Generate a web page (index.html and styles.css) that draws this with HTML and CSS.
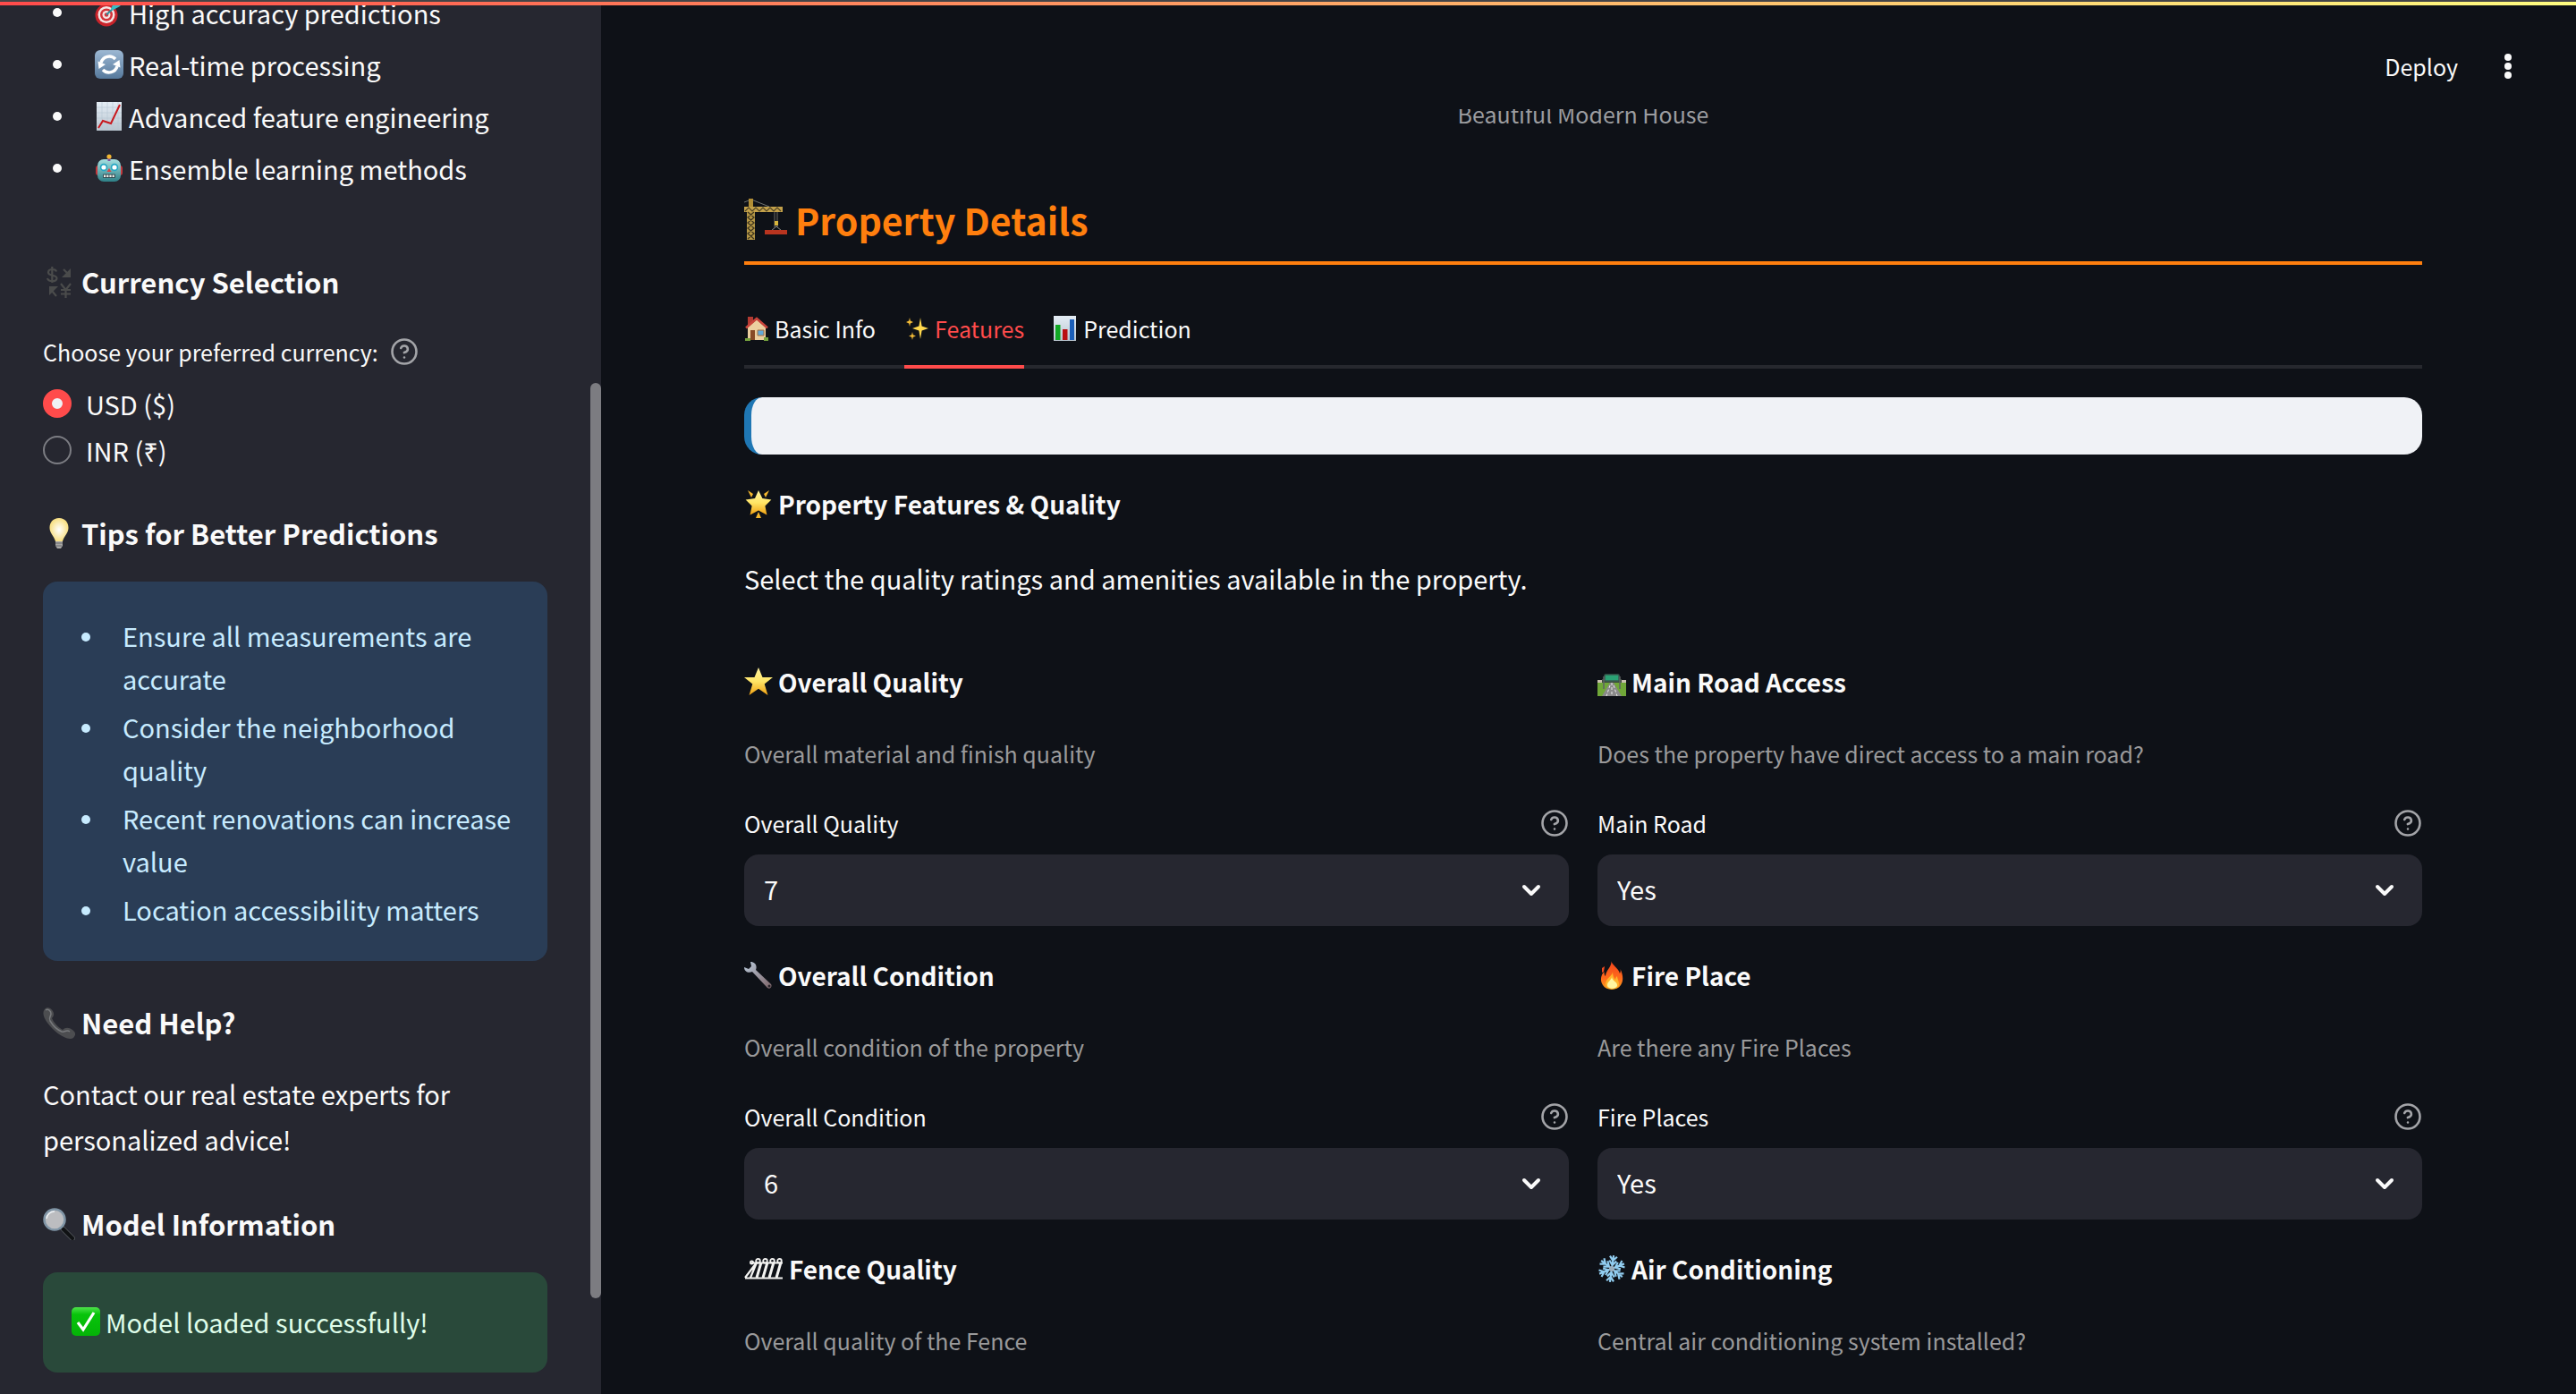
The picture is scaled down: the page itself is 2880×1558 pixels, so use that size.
FILE: index.html
```html
<!DOCTYPE html>
<html lang="en">
<head>
<meta charset="utf-8">
<title>Property Details</title>
<link rel="stylesheet" href="styles.css">
</head>
<body>
<svg class="sprite" aria-hidden="true">
  <defs>
    <linearGradient id="gold" x1="0" y1="0" x2="0" y2="1"><stop offset="0" stop-color="#fff3a0"/><stop offset=".5" stop-color="#ffe566"/><stop offset="1" stop-color="#f0a010"/></linearGradient>
    <linearGradient id="steel" x1="0" y1="0" x2="0" y2="1"><stop offset="0" stop-color="#9db8d3"/><stop offset="1" stop-color="#56799c"/></linearGradient>
    <linearGradient id="paper" x1="0" y1="0" x2="0" y2="1"><stop offset="0" stop-color="#e4edf5"/><stop offset="1" stop-color="#b9c5cf"/></linearGradient>
    <linearGradient id="teal" x1="0" y1="0" x2="0" y2="1"><stop offset="0" stop-color="#a5dfe0"/><stop offset="1" stop-color="#2e8087"/></linearGradient>
    <linearGradient id="green" x1="0" y1="0" x2="0" y2="1"><stop offset="0" stop-color="#4fe34b"/><stop offset=".25" stop-color="#08c40b"/><stop offset="1" stop-color="#04b307"/></linearGradient>
    <linearGradient id="flame" x1="0" y1="0" x2="0" y2="1"><stop offset="0" stop-color="#f0431c"/><stop offset=".6" stop-color="#ff6a1c"/><stop offset="1" stop-color="#f9a01c"/></linearGradient>
    <radialGradient id="glow"><stop offset="0" stop-color="#fff"/><stop offset="1" stop-color="#f8df82"/></radialGradient>
    <linearGradient id="tool" x1="0" y1="0" x2="1" y2="1"><stop offset="0" stop-color="#b9cadb"/><stop offset="1" stop-color="#7d6468"/></linearGradient>
  </defs>
  <symbol id="i-target" viewBox="0 0 32 32"><circle cx="13" cy="19" r="12.500" fill="#c9242b"/><circle cx="13" cy="18.500" r="9.500" fill="#f4e6e4"/><circle cx="13" cy="18.500" r="7" fill="#d4343a"/><circle cx="13" cy="18.500" r="4.500" fill="#f4e6e4"/><circle cx="13" cy="18.500" r="2.300" fill="#d4343a"/><path d="M13 18.500 24 8" stroke="#2d8f9d" stroke-width="2"/><path d="M18 12l4-9 4-2 0 4 6-1-4 5-9 5z" fill="#37bcc4"/></symbol>
  <symbol id="i-refresh" viewBox="0 0 32 32"><rect width="32" height="32" rx="6" fill="url(#steel)"/><path d="M7 14a9.500 9.500 0 0 1 16-4M25 18a9.500 9.500 0 0 1-16 4" fill="none" stroke="#fff" stroke-width="3.500"/><path d="M3.500 12.500l1 8.500 7.500-5zM28.500 19.500l-1-8.500-7.500 5z" fill="#fff"/></symbol>
  <symbol id="i-trend" viewBox="0 0 32 32"><path fill="url(#paper)" d="M2 0h28v32H2z"/><path d="M8 0v32M14 0v32M20 0v32M26 0v32M2 6h28M2 12h28M2 18h28M2 24h28" stroke="#b5c6d4" stroke-width=".6"/><path d="M4 29l5-8 9 3L28 3" fill="none" stroke="#c8191e" stroke-width="2"/></symbol>
  <symbol id="i-robot" viewBox="0 0 32 32"><rect x="1" y="13" width="30" height="11" rx="3" fill="#c4373c"/><rect x="3" y="6" width="26" height="25" rx="7" fill="url(#teal)"/><path d="M14.500 3h3v5h-3z" fill="#7d4fa0"/><circle cx="16" cy="3" r="2.600" fill="#f2b632"/><circle cx="10" cy="15" r="4.200" fill="#24a7c4"/><circle cx="22" cy="15" r="4.200" fill="#24a7c4"/><circle cx="10" cy="15" r="2.600" fill="#fff"/><circle cx="22" cy="15" r="2.600" fill="#fff"/><path d="M16 16l2.500 4h-5z" fill="#d84445"/><rect x="9" y="22.500" width="14" height="4.500" rx="1" fill="#314a52"/><path d="M10 24.700h12" stroke="#f1f1ea" stroke-width="2.500" stroke-dasharray="2.200 1"/></symbol>
  <symbol id="i-currency" viewBox="0 0 36 36"><g fill="none" stroke="#4a4b4b" stroke-width="2.200"><path d="M15 6.500c-1-3.500-9-3.500-9 1 0 4.500 9.500 2 9.500 6.500 0 4.500-9.500 4-10.500 0M10.300 1v18"/><path d="M20 20l5.500 7 5.500-7M25.500 27v9M20 27h11M20 31.500h11M23 4l6 6M15 34l-5-6"/></g><path d="M31 3v10H21zM7 23h10L7 33z" fill="#4a4b4b"/></symbol>
  <symbol id="i-bulb" viewBox="0 0 36 36"><path d="M18 1C11 1 7.500 6 7.500 12c0 6 5 9 6.500 15h8c1.500-6 6.500-9 6.500-15C28.500 6 25 1 18 1z" fill="url(#glow)"/><path d="M14 27h8v5l-2 3h-4l-2-3z" fill="#a8a7a5"/><path d="M14 29h8M14 32h7" stroke="#67686c"/></symbol>
  <symbol id="i-phone" viewBox="0 0 36 36"><path d="M2 3c2-3 7-2 9 2 2 3 1 6-1 8 2 5 7 10 12 13 3-3 7-3 11 0 4 3 4 6 1 9-4 3-14-1-23-10S-2 8 2 3z" fill="#4c4d50"/><path d="M3 4c3-2 6 1 6 4s-3 4-1 8c3 5 8 10 13 12 4 1 5-3 9 0" fill="none" stroke="#77797c" stroke-width="1.500"/></symbol>
  <symbol id="i-search" viewBox="0 0 36 36"><path d="M22 23l11 11" stroke="#4d5156" stroke-width="6" stroke-linecap="round"/><path d="M22.500 23.500l10.500 10.500" stroke="#101214" stroke-width="4" stroke-linecap="round"/><circle cx="13" cy="13" r="11.500" fill="#bcbdc0" stroke="#8095a6" stroke-width="2.500"/><path d="M4 12a9 9 0 0 1 9-8" fill="none" stroke="#eef3f6" stroke-width="1.500"/></symbol>
  <symbol id="i-check" viewBox="0 0 32 32"><rect width="32" height="32" rx="5" fill="url(#green)"/><path d="M7 17l6 8L25 6" fill="none" stroke="#fff" stroke-width="3.200"/></symbol>
  <symbol id="i-crane" viewBox="0 0 48 48"><path d="M0 5l8-3 20 8" fill="none" stroke="#6f726f"/><path d="M5 1h5v10H5z" fill="#b18e35"/><path d="M0 10h43v6H0z" fill="#c3a14a"/><path d="M1 15l4-4 4 4 4-4 4 4 4-4 4 4 4-4 4 4 4-4 4 4" fill="none" stroke="#4f4325" stroke-width="1.200"/><path d="M3 16h9v31H3z" fill="#b69746"/><path d="M4 16l7 6-7 6 7 6-7 6 7 6M11 16l-7 6 7 6-7 6 7 6-7 6" fill="none" stroke="#40371f" stroke-width="1.300"/><path d="M34 16v17M37 16v17" stroke="#6c6a65"/><path d="M34 26h4v5h-4z" fill="#d8b53c"/><path d="M36 32l-6 5M36 32l6 5" stroke="#8a8a88"/><path d="M23 36h25v5H23z" fill="#b8341f"/></symbol>
  <symbol id="i-house" viewBox="0 0 28 28"><path d="M4 1h6v9H4z" fill="#b23a32"/><path d="M4 13l10-9 10 9v14H4z" fill="#eccfa0"/><path d="M2 13.500L14 3l12 10.500" fill="none" stroke="#c9443b" stroke-width="2.600"/><path d="M7 16h5v11H7z" fill="#874a26"/><path d="M15 16h7v6h-7z" fill="#62a9d8" stroke="#a36d3e"/><path d="M1 25h6v3H1zM22 24h5v4h-5z" fill="#76a33e"/></symbol>
  <symbol id="i-sparkles" viewBox="0 0 28 28"><path d="M18 2l1.600 9.400 7.400 2.600-7.400 2.600L18 26l-1.600-9.400L9 14l7.400-2.600z" fill="#ffd84d"/><path d="M6 2l.8 3.600L10 7l-3.200 1.400L6 12l-.8-3.600L2 7l3.200-1.400zM9 18l.8 3.200 3.200 1.300-3.200 1.300L9 27l-.8-3.200L5 22.500l3.200-1.300z" fill="#f3bb37"/></symbol>
  <symbol id="i-bars" viewBox="0 0 28 28"><path d="M1 0h25v28H1z" fill="url(#paper)"/><path d="M3 10h5.500v17H3z" fill="#10a824"/><path d="M11 15h5.500v12H11z" fill="#b90f12"/><path d="M19 4h5v23h-5z" fill="#1b5fb9"/></symbol>
  <symbol id="i-glowstar" viewBox="0 0 32 32"><path d="M16 1l4.400 9 10 1.500-7 7 2 10-9.400-5-9.400 5 2-10-7-7L12 10z" fill="url(#gold)"/><path d="M4 1l6 4-2 4zM28 1l-6 4 2 4zM16 25l-3 7h6z" fill="#f4b72d"/></symbol>
  <symbol id="i-star" viewBox="0 0 32 32"><path d="M16 0l4.500 11H32l-9.300 7.500L26.500 31 16 23.800 5.500 31l3.800-12.500L0 11h11.500z" fill="url(#gold)"/></symbol>
  <symbol id="i-road" viewBox="0 0 32 32"><path d="M0 16h32v16H0z" fill="#70a738"/><path d="M0 14h32v3H0z" fill="#c8bfae"/><path d="M5 13h22v4H5z" fill="#3d4a3e"/><path d="M14 17h4l9 15H5z" fill="#8a8a8a"/><path d="M16 17v15M14 20l-4 12M18 20l4 12" stroke="#eee" stroke-dasharray="3 2"/><rect x="8" y="8" width="16" height="7" rx="1" fill="#2aa274" stroke="#385c50" stroke-width="1.500"/><path d="M7 10v14M25 10v14" stroke="#5d6264" stroke-width="1.500"/></symbol>
  <symbol id="i-wrench" viewBox="0 0 32 32"><path d="M7 1l1 5-3 3-5-2c0 5 5 7 9 5l16 17c3 4 7 0 5-3L13 10c2-5-1-9-6-9z" fill="url(#tool)"/><circle cx="28" cy="28" r="1.500" fill="#28242a"/></symbol>
  <symbol id="i-fire" viewBox="0 0 32 32"><path d="M15.500 0c0 4 8 8 9.500 14 1-2 1-3 .5-5 3 6 4 13 .5 18-4 6.500-16 6.500-20 0-4-6-1.500-12 1.500-15 0 3 .5 4 1.500 5 .5-7 7-10 6.500-17z" fill="url(#flame)"/><path d="M17 12c0 5-8 7-8 14 0 7 15 7 15 0 0-4-2-6-2-9-2 2-2 3-2 4-2-2-3-5-3-9z" fill="#ffb32b"/><path d="M16 18c0 3-5 5-5 9 0 5 11 5 11 0 0-4-5-4-6-9z" fill="#fff6a0"/><path d="M5 8l3-2-1 6-2 1z" fill="#f04b20"/></symbol>
  <symbol id="i-fence" viewBox="0 0 44 24"><g fill="none" stroke="#f3f3f1" stroke-width="2.200" stroke-linejoin="round"><path d="M8 5.500h35M1 22.500h42M1 22L14 5M7 22l7-17"/><path d="M14 22l5-17M21 22l5-17M28 22l5-17M36 22l5-17" stroke-width="3"/></g><g fill="none" stroke="#f3f3f1" stroke-width="1.800"><circle cx="8.500" cy="5" r="1.600"/><circle cx="15.500" cy="3.300" r="2.300"/><circle cx="23.500" cy="3.300" r="2.300"/><circle cx="31.500" cy="3.300" r="2.300"/><circle cx="39.500" cy="3.300" r="2.300"/></g></symbol>
  <symbol id="i-snow" viewBox="0 0 32 32"><g fill="none" stroke="#91cdf0" stroke-width="2.200" transform="rotate(8 16 16)"><path id="arm" d="M16 16V1M12 2l4 5 4-5M12 7l4 5 4-5"/><use href="#arm" transform="rotate(60 16 16)"/><use href="#arm" transform="rotate(120 16 16)"/><use href="#arm" transform="rotate(180 16 16)"/><use href="#arm" transform="rotate(240 16 16)"/><use href="#arm" transform="rotate(300 16 16)"/></g><circle cx="16" cy="16" r="3" fill="#9aaebd"/></symbol>
  <symbol id="i-help" viewBox="0 0 32 32"><g fill="none" stroke="currentColor" stroke-width="2.600" stroke-linecap="round" stroke-linejoin="round"><circle cx="16" cy="16" r="13.500"/><path d="M12.200 12a4 4 0 0 1 7.700 1.300c0 2.700-4 3.800-4 3.800M16 22.500h.01"/></g></symbol>
</svg>

<div class="app">
  <div class="decoration"></div>
  <aside class="sidebar">
    <ul class="highlights">
      <li><svg class="emoji"><use href="#i-target"/></svg>High accuracy predictions</li>
      <li><svg class="emoji"><use href="#i-refresh"/></svg>Real-time processing</li>
      <li><svg class="emoji"><use href="#i-trend"/></svg>Advanced feature engineering</li>
      <li><svg class="emoji"><use href="#i-robot"/></svg>Ensemble learning methods</li>
    </ul>

    <section class="currency">
      <h3 class="side-title"><svg class="emoji large"><use href="#i-currency"/></svg>Currency Selection</h3>
      <div class="field-label currency-label"><span id="currency-label">Choose your preferred currency:</span><button class="help" type="button" aria-label="Help"><svg><use href="#i-help"/></svg></button></div>
      <div class="radios" role="radiogroup" aria-labelledby="currency-label">
        <label class="radio"><input type="radio" name="currency" checked>USD ($)</label>
        <label class="radio"><input type="radio" name="currency">INR (₹)</label>
      </div>
    </section>

    <section class="side-section">
      <h3 class="side-title"><svg class="emoji large"><use href="#i-bulb"/></svg>Tips for Better Predictions</h3>
      <ul class="notice tips">
        <li>Ensure all measurements are accurate</li>
        <li>Consider the neighborhood quality</li>
        <li>Recent renovations can increase value</li>
        <li>Location accessibility matters</li>
      </ul>
    </section>

    <section class="side-section">
      <h3 class="side-title"><svg class="emoji large"><use href="#i-phone"/></svg>Need Help?</h3>
      <p class="side-text">Contact our real estate experts for personalized advice!</p>
    </section>

    <section class="side-section">
      <h3 class="side-title"><svg class="emoji large"><use href="#i-search"/></svg>Model Information</h3>
      <p class="notice success"><svg class="emoji"><use href="#i-check"/></svg>Model loaded successfully!</p>
    </section>
    <div class="scroll-thumb"></div>
  </aside>

  <main class="main">
    <header class="toolbar">
      <button class="deploy" type="button">Deploy</button>
      <button class="menu" type="button" aria-label="Menu"><svg viewBox="0 0 8 28"><circle cx="4" cy="4" r="4"/><circle cx="4" cy="14" r="4"/><circle cx="4" cy="24" r="4"/></svg></button>
    </header>
    <div class="content">
      <p class="image-caption">Beautiful Modern House</p>
      <h2 class="page-title"><svg class="emoji crane"><use href="#i-crane"/></svg>Property Details</h2>
      <div class="tabs" role="tablist">
        <button class="tab" type="button" role="tab" aria-selected="false"><svg class="emoji small"><use href="#i-house"/></svg>Basic Info</button>
        <button class="tab active" type="button" role="tab" aria-selected="true"><svg class="emoji small"><use href="#i-sparkles"/></svg>Features</button>
        <button class="tab" type="button" role="tab" aria-selected="false"><svg class="emoji small"><use href="#i-bars"/></svg>Prediction</button>
      </div>
      <div class="card"></div>
      <h3 class="item-title"><svg class="emoji"><use href="#i-glowstar"/></svg>Property Features &amp; Quality</h3>
      <p class="intro">Select the quality ratings and amenities available in the property.</p>

      <div class="features">
        <section class="feature">
          <h4 class="item-title"><svg class="emoji"><use href="#i-star"/></svg>Overall Quality</h4>
          <p class="description">Overall material and finish quality</p>
          <div class="field-label"><label for="quality">Overall Quality</label><button class="help" type="button" aria-label="Help"><svg><use href="#i-help"/></svg></button></div>
          <div class="select-box"><select id="quality"><option>7</option></select><svg class="chevron" viewBox="0 0 22 14"><path d="M3 3l8 8 8-8"/></svg></div>
        </section>
        <section class="feature">
          <h4 class="item-title"><svg class="emoji"><use href="#i-road"/></svg>Main Road Access</h4>
          <p class="description">Does the property have direct access to a main road?</p>
          <div class="field-label"><label for="road">Main Road</label><button class="help" type="button" aria-label="Help"><svg><use href="#i-help"/></svg></button></div>
          <div class="select-box"><select id="road"><option>Yes</option></select><svg class="chevron" viewBox="0 0 22 14"><path d="M3 3l8 8 8-8"/></svg></div>
        </section>
        <section class="feature">
          <h4 class="item-title"><svg class="emoji"><use href="#i-wrench"/></svg>Overall Condition</h4>
          <p class="description">Overall condition of the property</p>
          <div class="field-label"><label for="condition">Overall Condition</label><button class="help" type="button" aria-label="Help"><svg><use href="#i-help"/></svg></button></div>
          <div class="select-box"><select id="condition"><option>6</option></select><svg class="chevron" viewBox="0 0 22 14"><path d="M3 3l8 8 8-8"/></svg></div>
        </section>
        <section class="feature">
          <h4 class="item-title"><svg class="emoji"><use href="#i-fire"/></svg>Fire Place</h4>
          <p class="description">Are there any Fire Places</p>
          <div class="field-label"><label for="fire">Fire Places</label><button class="help" type="button" aria-label="Help"><svg><use href="#i-help"/></svg></button></div>
          <div class="select-box"><select id="fire"><option>Yes</option></select><svg class="chevron" viewBox="0 0 22 14"><path d="M3 3l8 8 8-8"/></svg></div>
        </section>
        <section class="feature">
          <h4 class="item-title"><svg class="emoji fence"><use href="#i-fence"/></svg>Fence Quality</h4>
          <p class="description">Overall quality of the Fence</p>
        </section>
        <section class="feature">
          <h4 class="item-title"><svg class="emoji"><use href="#i-snow"/></svg>Air Conditioning</h4>
          <p class="description">Central air conditioning system installed?</p>
        </section>
      </div>
    </div>
  </main>
</div>
</body>
</html>
```
FILE: styles.css
```css
* { box-sizing: border-box; }

body {
  margin: 0;
  background: #0e1117;
  color: #fafafa;
  font-family: "Noto Sans CJK SC", "Noto Sans", sans-serif;
  font-size: 29px;
}

h2, h3, h4, p, ul { margin: 0; padding: 0; }
button, select, input { font: inherit; color: inherit; margin: 0; }
button { padding: 0; border: 0; background: none; cursor: pointer; }

.sprite { position: absolute; width: 0; height: 0; }

.app {
  position: relative;
  display: grid;
  grid-template-columns: 672px 1fr;
  height: 100vh;
  overflow: hidden;
}

.decoration {
  position: absolute;
  inset: 0 0 auto;
  z-index: 3;
  height: 6px;
  border-top: 2px solid #444447;
  background: linear-gradient(90deg, #ff4b4b, #fffd80);
}

.emoji { flex: none; width: 32px; height: 32px; }
.emoji.large { width: 36px; height: 36px; }
.emoji.small { width: 28px; height: 28px; }
.emoji.crane { width: 48px; height: 48px; }
.emoji.fence { width: 44px; height: 24px; }

/* Sidebar */
.sidebar {
  position: relative;
  padding: 0 60px 0 48px;
  background: #262730;
  overflow: hidden;
}

.highlights {
  display: grid;
  gap: 6px;
  margin-top: -12px;
  list-style: none;
}
.highlights li {
  display: flex;
  align-items: center;
  gap: 6px;
  line-height: 52px;
}
.highlights li::before {
  content: "";
  width: 10px;
  height: 10px;
  margin: 0 31px 0 11px;
  border-radius: 50%;
  background: #fafafa;
}

.currency { margin-top: 79px; }
.side-section { margin-top: 47px; }
.currency + .side-section { margin-top: 55px; }

.side-title {
  display: flex;
  align-items: center;
  gap: 7px;
  margin-bottom: 32px;
  font-size: 31px;
  line-height: 44px;
}
.side-text { line-height: 51px; }

.field-label {
  display: flex;
  align-items: center;
  justify-content: space-between;
  font-size: 25px;
  line-height: 40px;
}
.currency-label {
  justify-content: flex-start;
  gap: 13px;
  margin: 36px 0 22px;
}

.help { width: 32px; height: 32px; color: #a3a4a8; }
.help svg { display: block; width: 32px; height: 32px; }

.radios { display: grid; gap: 20px; }
.radio { display: flex; align-items: center; gap: 16px; line-height: 32px; }
.radio input {
  appearance: none;
  width: 32px;
  height: 32px;
  border: 2px solid #7c7d83;
  border-radius: 50%;
}
.radio input:checked {
  border: 10px solid #ff4b4b;
  background: #f0f2f6;
}

.notice { border-radius: 16px; line-height: 48px; }
.tips {
  display: grid;
  gap: 6px;
  padding: 36px 16px 34px 43px;
  background: #2a3d56;
  color: #c7ebff;
  list-style: none;
}
.tips li { display: flex; }
.tips li::before {
  content: "";
  flex: none;
  width: 10px;
  height: 10px;
  margin: 21px 36px 0 0;
  border-radius: 50%;
  background: #c7ebff;
}
.success {
  display: flex;
  align-items: center;
  gap: 6px;
  padding: 31px 32px 33px;
  background: #29493a;
  color: #dffde9;
}

.scroll-thumb {
  position: absolute;
  top: 428px;
  right: 0;
  width: 12px;
  height: 1023px;
  border-radius: 6px;
  background: #7c7c81;
}

/* Main column */
.toolbar {
  position: relative;
  z-index: 2;
  display: flex;
  justify-content: flex-end;
  align-items: center;
  gap: 52px;
  height: 122px;
  padding: 28px 72px 2px 0;
  background: #0e1117;
}
.deploy { font-size: 25px; line-height: 40px; }
.menu svg { display: block; width: 8px; height: 28px; fill: #fafafa; }

.content { padding: 0 172px 0 160px; }

.image-caption {
  margin-top: -15px;
  color: #9c9da0;
  font-size: 25px;
  line-height: 40px;
  text-align: center;
}

.page-title {
  display: flex;
  align-items: center;
  gap: 9px;
  margin-top: 69px;
  padding-bottom: 18px;
  border-bottom: 4px solid #ff7f0e;
  color: #ff7f0e;
  font-size: 41px;
  line-height: 58px;
}

.tabs {
  display: flex;
  gap: 32px;
  margin-top: 51px;
  background: linear-gradient(#26282e, #26282e) bottom / 100% 4px no-repeat;
}
.tab {
  display: flex;
  align-items: center;
  gap: 6px;
  padding-bottom: 21px;
  border-bottom: 4px solid transparent;
  font-size: 25px;
  line-height: 40px;
}
.tab.active { border-color: #ff4b4b; color: #ff4b4b; }

.card {
  height: 64px;
  margin: 32px 0 35px;
  border-left: 8px solid #1f77b4;
  border-radius: 20px;
  background: #f0f2f6;
}

.item-title {
  display: flex;
  align-items: center;
  gap: 6px;
  font-size: 28px;
  line-height: 40px;
}

.intro { margin-top: 37px; line-height: 52px; }

.features {
  display: grid;
  grid-template-columns: 1fr 1fr;
  gap: 35px 32px;
  margin-top: 70px;
}
.description {
  margin: 40px 0 38px;
  color: #9a9a9b;
  font-size: 25px;
  line-height: 40px;
}

.select-box { display: grid; margin-top: 15px; align-items: center; }
.select-box > * { grid-area: 1 / 1; }
.select-box select {
  appearance: none;
  width: 100%;
  height: 80px;
  padding: 0 22px 4px;
  border: 0;
  border-radius: 16px;
  background: #262730;
}
.chevron {
  justify-self: end;
  width: 22px;
  height: 14px;
  margin-right: 31px;
  fill: none;
  stroke: #fafafa;
  stroke-width: 4px;
  stroke-linecap: round;
  stroke-linejoin: round;
  pointer-events: none;
}
```
